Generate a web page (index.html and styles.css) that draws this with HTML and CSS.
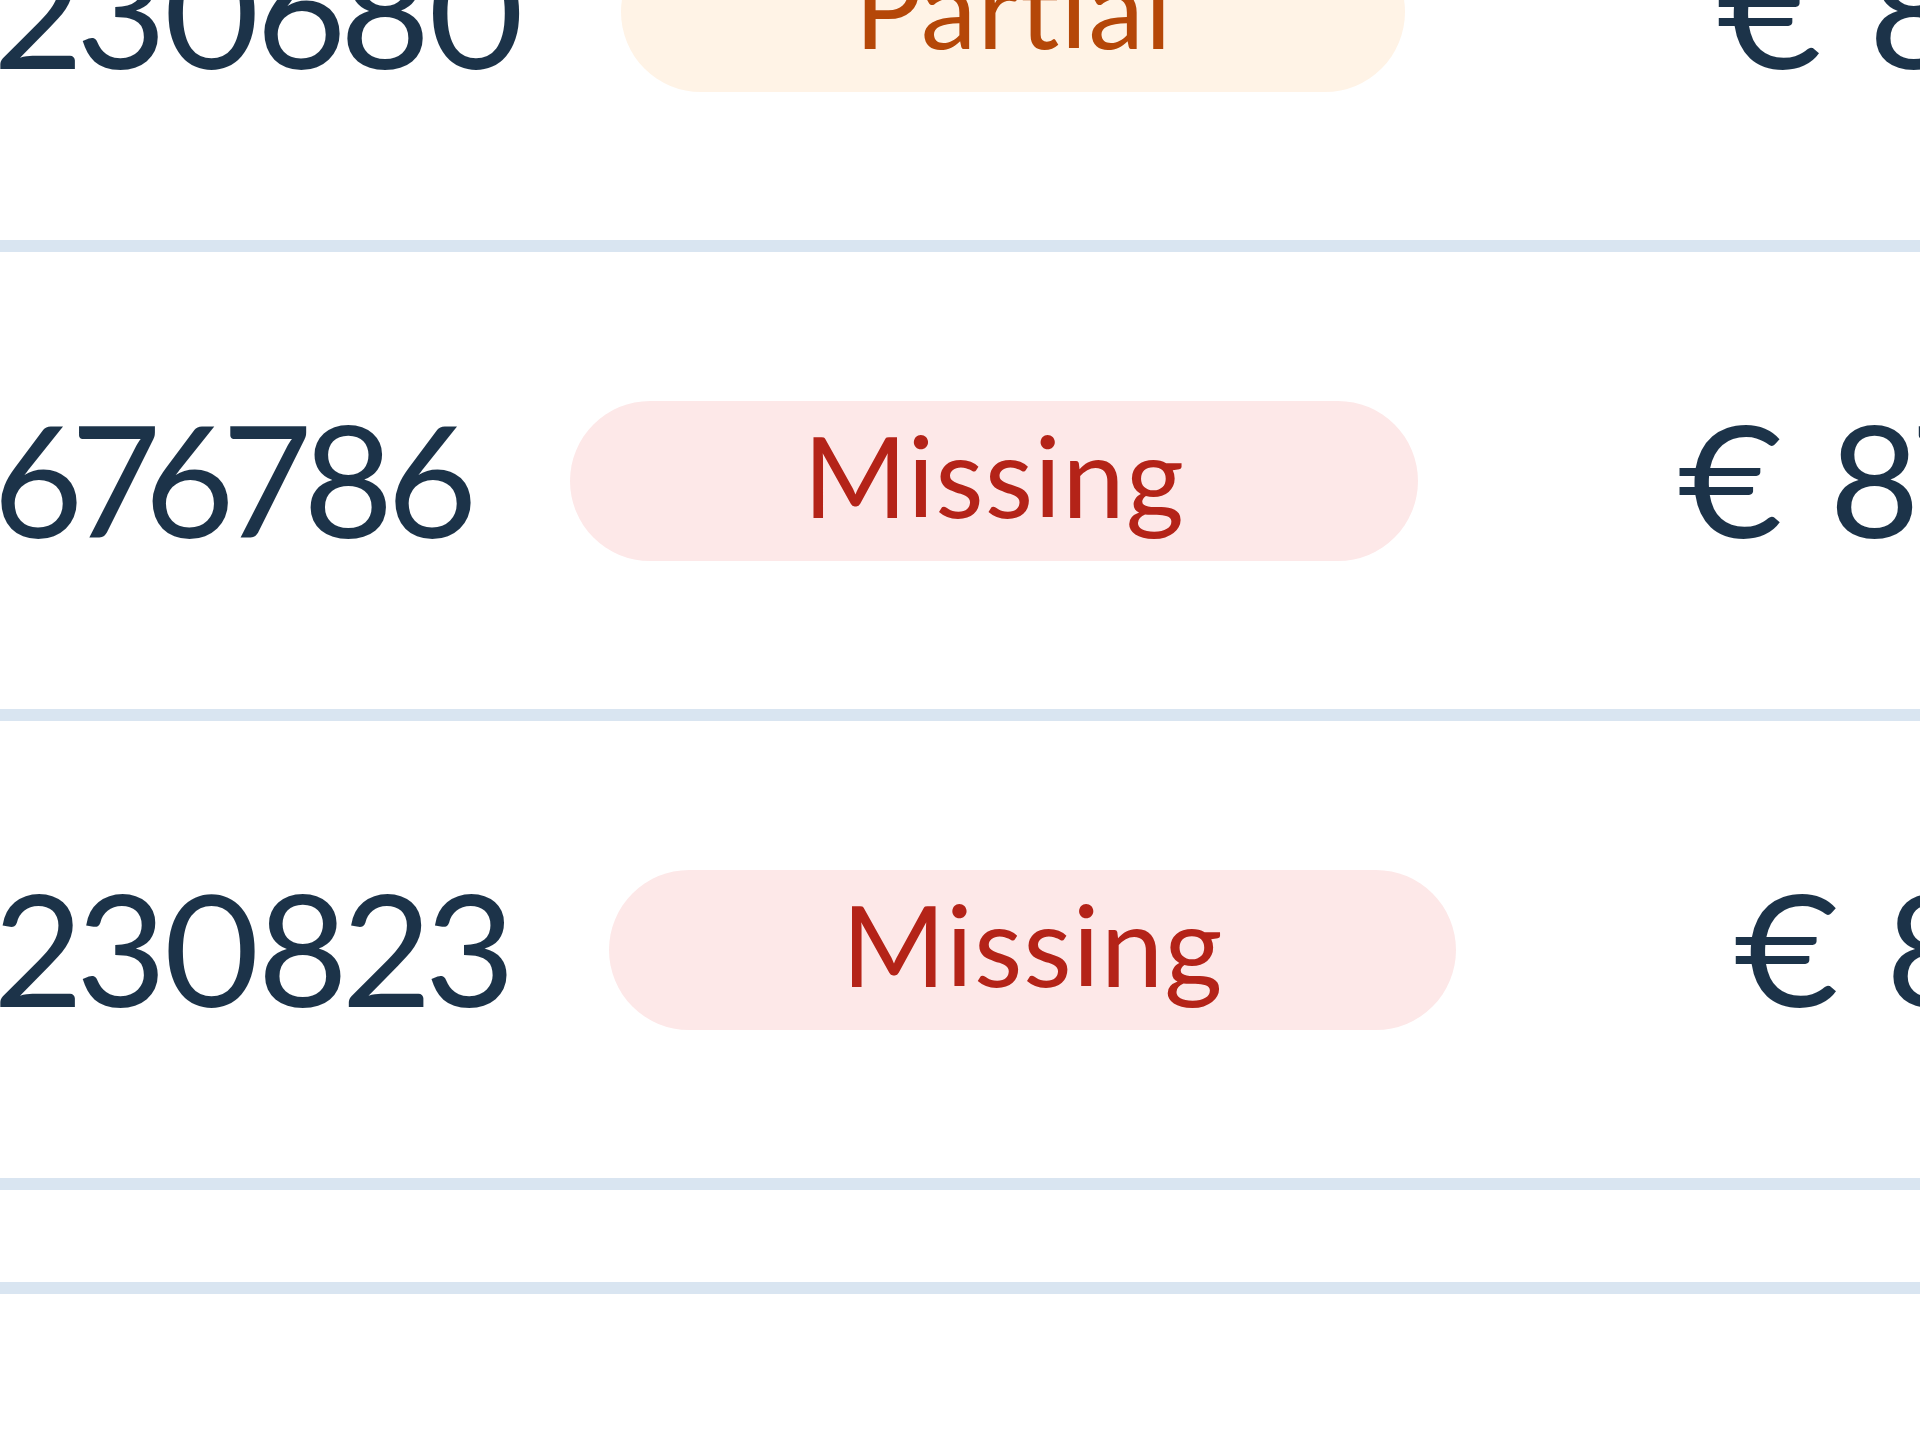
FILE: index.html
```html
<!DOCTYPE html>
<html lang="en">
<head>
    <meta charset="UTF-8">
    <meta name="viewport" content="width=device-width, initial-scale=1.0">
    <title>Invoices</title>
    <link rel="stylesheet" href="styles.css">
</head>
<body>
    <main class="invoice-table">
        <div class="row">
            <span class="invoice-id">230680</span>
            <span class="status status-partial">Partial</span>
            <span class="amount">€ 81,10</span>
        </div>
        <div class="row">
            <span class="invoice-id">676786</span>
            <span class="status status-missing">Missing</span>
            <span class="amount">€ 87,50</span>
        </div>
        <div class="row">
            <span class="invoice-id">230823</span>
            <span class="status status-missing">Missing</span>
            <span class="amount">€ 8,40</span>
        </div>
        <div class="row row-empty"></div>
    </main>
</body>
</html>
```

FILE: styles.css
```css
/* General Styles */
body {
    margin: 0;
    background: #ffffff;
    font-family: 'Lato', 'Noto Sans', sans-serif;
    color: #1c3349;
    overflow: hidden;
}
.invoice-table {
    width: 2190px;
    margin-top: -217px;
    margin-left: -6px;
}
/* Rows */
.row {
    display: flex;
    align-items: center;
    gap: 100px;
    height: 457px;
    border-bottom: 12px solid #d9e5f1;
}
.row-empty {
    height: 92px;
}
.invoice-id,
.amount {
    padding-bottom: 6px;
    font-size: 156px;
    line-height: 1;
    letter-spacing: -6px;
    font-variant-numeric: proportional-nums;
}
.amount {
    margin-left: auto;
    word-spacing: 13px;
}
/* Status Pills */
.status {
    box-sizing: border-box;
    display: flex;
    align-items: center;
    justify-content: center;
    height: 160px;
    padding: 0 233px 12px;
    border-radius: 80px;
    font-size: 112px;
    line-height: 1;
    letter-spacing: 1px;
}
.status-partial {
    background: #fff3e6;
    color: #b54708;
}
.status-missing {
    background: #fde8e8;
    color: #b42318;
}
```
